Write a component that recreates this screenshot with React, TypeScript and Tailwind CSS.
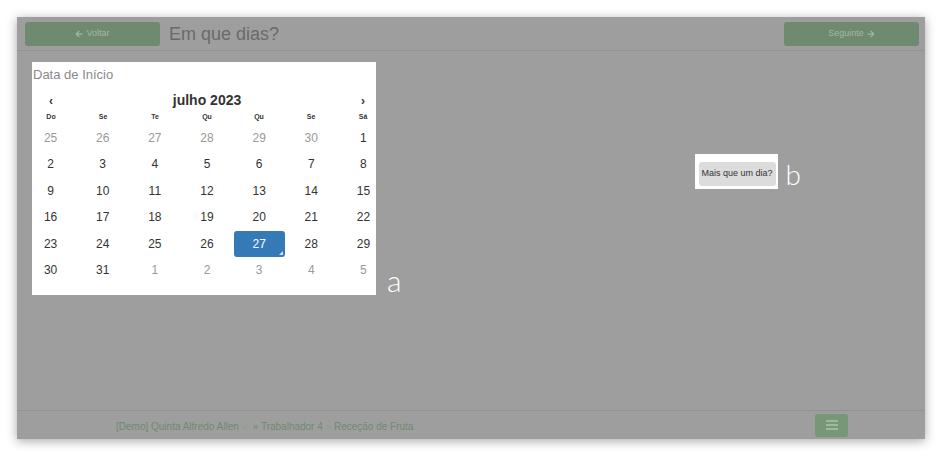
import React from "react";
import { FaArrowLeft, FaArrowRight } from "react-icons/fa";

const prev = [25, 26, 27, 28, 29, 30];
const days: { d: number; muted: boolean }[] = [
  ...prev.map((d) => ({ d, muted: true })),
  ...Array.from({ length: 31 }, (_, i) => ({ d: i + 1, muted: false })),
  ...[1, 2, 3, 4, 5].map((d) => ({ d, muted: true })),
];
const weekdays = ["Do", "Se", "Te", "Qu", "Qu", "Se", "Sá"];

export default function App() {
  return (
    <div className="w-[940px] h-[455px] bg-white overflow-hidden" style={{ fontFamily: "'Liberation Sans', Arial, sans-serif" }}>
      <div className="ml-[17px] mt-[17px] w-[908px] h-[422px] bg-[#9e9e9e] flex flex-col shadow-[0_2px_10px_rgba(0,0,0,0.35)]">
        {/* header */}
        <div className="h-[34px] border-b border-[#929292] flex items-start pt-[5px] pl-[8px] pr-[6px]">
          <div className="w-[135px] h-[24px] rounded-[3px] bg-[#6f8a6f] flex items-center justify-center gap-[3px] text-[9px] text-[#a3b8a3]">
            <FaArrowLeft className="w-[8px] h-[8px]" />
            Voltar
          </div>
          <div className="ml-[9px] text-[18px] leading-[24px] text-[#6a6a6a]">Em que dias?</div>
          <div className="ml-auto w-[135px] h-[24px] rounded-[3px] bg-[#6f8a6f] flex items-center justify-center gap-[3px] text-[9px] text-[#a3b8a3]">
            Seguinte
            <FaArrowRight className="w-[8px] h-[8px]" />
          </div>
        </div>
        {/* main */}
        <div className="flex-1 flex items-start pt-[11px] pl-[15px]">
          <div className="w-[344px] h-[233px] bg-white pl-[1px] flex flex-col">
            <div className="text-[13px] leading-[16px] mt-[5px] text-[#8a8a8a]">Data de Início</div>
            <div className="-ml-[8px] w-[364px] mt-[7px]">
              <div className="grid grid-cols-7 h-[18px] items-center text-[#333]">
                <div className="text-center text-[12px] font-bold">‹</div>
                <div className="col-span-5 text-center text-[14px] font-bold">julho 2023</div>
                <div className="text-center text-[12px] font-bold">›</div>
              </div>
              <div className="grid grid-cols-7 h-[17px] pt-[2px] items-center text-[7px] font-bold text-[#333]">
                {weekdays.map((w, i) => (
                  <div key={i} className="text-center">{w}</div>
                ))}
              </div>
              <div className="grid grid-cols-7 gap-x-[1px] gap-y-[0.4px]">
                {days.map((x, i) => {
                  const sel = !x.muted && x.d === 27;
                  return (
                    <div
                      key={i}
                      className={
                        "relative h-[26px] flex items-center justify-center text-[12px] rounded-[3px] " +
                        (sel ? "bg-[#337ab7] text-white" : x.muted ? "text-[#999]" : "text-[#333]")
                      }
                    >
                      {x.d}
                      {sel && (
                        <span className="absolute right-[2px] bottom-[2px] w-0 h-0 border-l-[4px] border-l-transparent border-b-[4px] border-b-white/80" />
                      )}
                    </div>
                  );
                })}
              </div>
            </div>
          </div>
          <div className="self-start mt-[203px] ml-[11px] text-[30px] leading-[30px] font-light text-white" style={{ fontFamily: "Lato, 'Open Sans', sans-serif" }}>
            a
          </div>
          <div className="ml-[293px] mt-[92px] flex items-center">
            <div className="w-[83px] h-[35px] bg-white flex items-end justify-end pr-[2px] pb-[3px]">
              <div className="w-[77px] h-[24px] rounded-[3px] bg-[#dcdcdc] flex items-center justify-center text-[9px] text-[#333]">
                Mais que um dia?
              </div>
            </div>
            <div className="ml-[8px] mt-[4px] text-[28px] leading-[28px] font-light text-white" style={{ fontFamily: "Lato, 'Open Sans', sans-serif" }}>
              b
            </div>
          </div>
        </div>
        {/* footer */}
        <div className="h-[29px] border-t border-[#929292] flex items-center pl-[99px] pr-[77px]">
          <div className="text-[10px] text-[#6f8a6f] mt-[2px]">
            [Demo] Quinta Alfredo Allen <span className="text-[#87a087]">»</span> &nbsp;» Trabalhador 4 <span className="text-[#87a087]">»</span> Receção de Fruta
          </div>
          <div className="ml-auto w-[33px] h-[23px] rounded-[3px] bg-[#789678] flex flex-col items-center justify-center gap-[2px]">
            <span className="w-[12px] h-[2px] bg-[#a0b8a0]" />
            <span className="w-[12px] h-[2px] bg-[#a0b8a0]" />
            <span className="w-[12px] h-[2px] bg-[#a0b8a0]" />
          </div>
        </div>
      </div>
    </div>
  );
}
